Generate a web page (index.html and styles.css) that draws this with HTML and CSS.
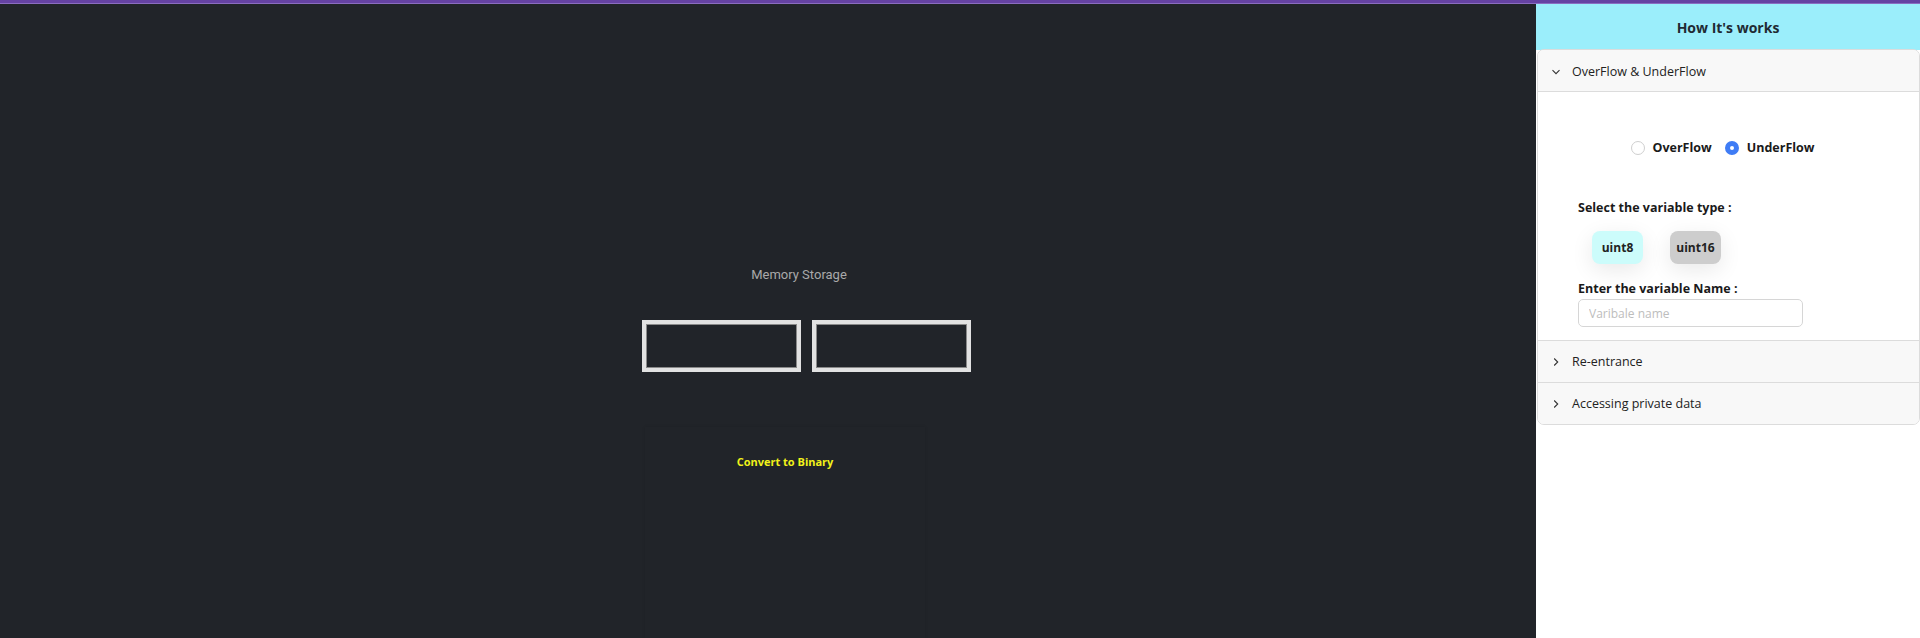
FILE: index.html
```html
<!DOCTYPE html>
<html>
<head>
<meta charset="utf-8">
<link rel="stylesheet" href="styles.css">
</head>
<body>
<div class="topbar"></div>
<div class="layout">
  <main class="stage">
    <div class="mem-title">Memory Storage</div>
    <div class="mem-boxes">
      <div class="mem-box"></div>
      <div class="mem-box"></div>
    </div>
    <div class="convert-card">
      <div class="convert-title">Convert to Binary</div>
    </div>
  </main>
  <aside class="side">
    <div class="side-head">How It's works</div>
    <div class="accordion">
      <div class="acc-item">
        <div class="acc-head">
          <svg class="chev" viewBox="0 0 10 10" width="10" height="10"><path d="M1.5 3.2 L5 6.7 L8.5 3.2" fill="none" stroke="#333" stroke-width="1.1"/></svg>
          <span>OverFlow &amp; UnderFlow</span>
        </div>
        <div class="acc-body">
          <div class="radios">
            <label class="radio"><span class="dot"></span>OverFlow</label>
            <label class="radio"><span class="dot on"></span>UnderFlow</label>
          </div>
          <div class="lbl lbl-type">Select the variable type :</div>
          <div class="types">
            <button class="type t8">uint8</button>
            <button class="type t16">uint16</button>
          </div>
          <div class="lbl lbl-name">Enter the variable Name :</div>
          <input class="name-input" type="text" placeholder="Varibale name">
        </div>
      </div>
      <div class="acc-item">
        <div class="acc-head">
          <svg class="chev" viewBox="0 0 10 10" width="10" height="10"><path d="M3.2 1.5 L6.7 5 L3.2 8.5" fill="none" stroke="#333" stroke-width="1.1"/></svg>
          <span>Re-entrance</span>
        </div>
      </div>
      <div class="acc-item last">
        <div class="acc-head">
          <svg class="chev" viewBox="0 0 10 10" width="10" height="10"><path d="M3.2 1.5 L6.7 5 L3.2 8.5" fill="none" stroke="#333" stroke-width="1.1"/></svg>
          <span>Accessing private data</span>
        </div>
      </div>
    </div>
  </aside>
</div>
</body>
</html>
```
FILE: styles.css
```css
html, body {
  margin: 0;
  padding: 0;
  height: 100%;
  overflow: hidden;
}
body {
  background: #212429;
  font-family: "Open Sans", "Noto Sans", sans-serif;
}
.topbar {
  height: 3px;
  background: #6542a2;
  border-bottom: 1px solid #8a6cc0;
}
.layout {
  display: flex;
  height: 634px;
}
.stage {
  flex: 1;
  display: flex;
  flex-direction: column;
  align-items: center;
  padding-top: 262px;
}
.mem-title {
  font-family: Roboto, sans-serif;
  font-size: 13px;
  color: #a9a9a9;
  line-height: 17px;
  margin-left: 62px;
}
.mem-boxes {
  display: flex;
  gap: 11px;
  margin-top: 37px;
  margin-left: 76px;
}
.mem-box {
  width: 151px;
  height: 44px;
  border: 4px solid #e2e2e2;
  box-shadow: inset 0 0 0 1px #8a8a8a;
}
.convert-card {
  width: 280px;
  flex: 1;
  margin-top: 55px;
  margin-left: 34px;
  box-shadow: 0 0 3px rgba(0,0,0,0.12);
  display: flex;
  justify-content: center;
  padding-top: 28px;
}
.convert-title {
  font-family: "Open Sans", sans-serif;
  font-weight: 700;
  font-size: 11px;
  color: #f2f21a;
  line-height: 14px;
}
.side {
  width: 384px;
  background: #fff;
  display: flex;
  flex-direction: column;
}
.side-head {
  height: 46px;
  background: #9beefb;
  display: flex;
  align-items: center;
  justify-content: center;
  font-weight: 700;
  font-size: 14px;
  color: #1f2a33;
}
.accordion {
  border: 1px solid #dcdcdc;
  border-radius: 7px;
  overflow: hidden;
  margin-left: 1px;
  margin-top: -1px;
}
.acc-item + .acc-item {
  border-top: 1px solid #dcdcdc;
}
.acc-head {
  height: 41px;
  background: #f8f8f8;
  display: flex;
  align-items: center;
  padding-left: 13px;
  font-size: 12.5px;
  color: #222;
}
.acc-item:first-child .acc-head {
  padding-top: 2px;
  height: 39px;
}
.chev {
  margin-right: 11px;
}
.acc-body {
  border-top: 1px solid #dcdcdc;
  background: #fff;
  padding: 47px 0 13px 40px;
  display: flex;
  flex-direction: column;
  align-items: flex-start;
  height: 188px;
}
.radios {
  display: flex;
  gap: 13px;
  align-self: stretch;
  justify-content: center;
  margin-right: 52px;
  font-weight: 700;
  font-size: 12.5px;
  color: #1a1a1a;
  height: 18px;
  align-items: center;
}
.radio {
  display: flex;
  align-items: center;
  gap: 8px;
}
.dot {
  width: 12px;
  height: 12px;
  border: 1px solid #cfcfcf;
  border-radius: 50%;
  box-sizing: content-box;
  background: #fff;
}
.dot.on {
  width: 4px;
  height: 4px;
  border: 5px solid #3f7cf5;
}
.lbl {
  font-weight: 700;
  font-size: 12.5px;
  color: #1a1a1a;
  line-height: 17px;
}
.lbl-type {
  margin-top: 43px;
}
.types {
  display: flex;
  gap: 27px;
  margin-top: 15px;
  margin-left: 14px;
}
.type {
  width: 51px;
  height: 33px;
  border: none;
  border-radius: 8px;
  font-family: "Open Sans", sans-serif;
  font-weight: 700;
  font-size: 12px;
  color: #222;
  padding: 0;
  box-shadow: 0 6px 22px rgba(0,0,0,0.09);
}
.t8 { background: #ccfcfb; }
.t16 { background: #cdcdcd; }
.lbl-name {
  margin-top: 16px;
}
.name-input {
  margin-top: 2px;
  width: 225px;
  height: 29px;
  box-sizing: border-box;
  border: 1px solid #d6d6d6;
  border-radius: 5px;
  padding: 0 10px;
  font-family: "Open Sans", sans-serif;
  font-size: 12px;
  outline: none;
}
.name-input::placeholder {
  color: #bdbdbd;
}
```
